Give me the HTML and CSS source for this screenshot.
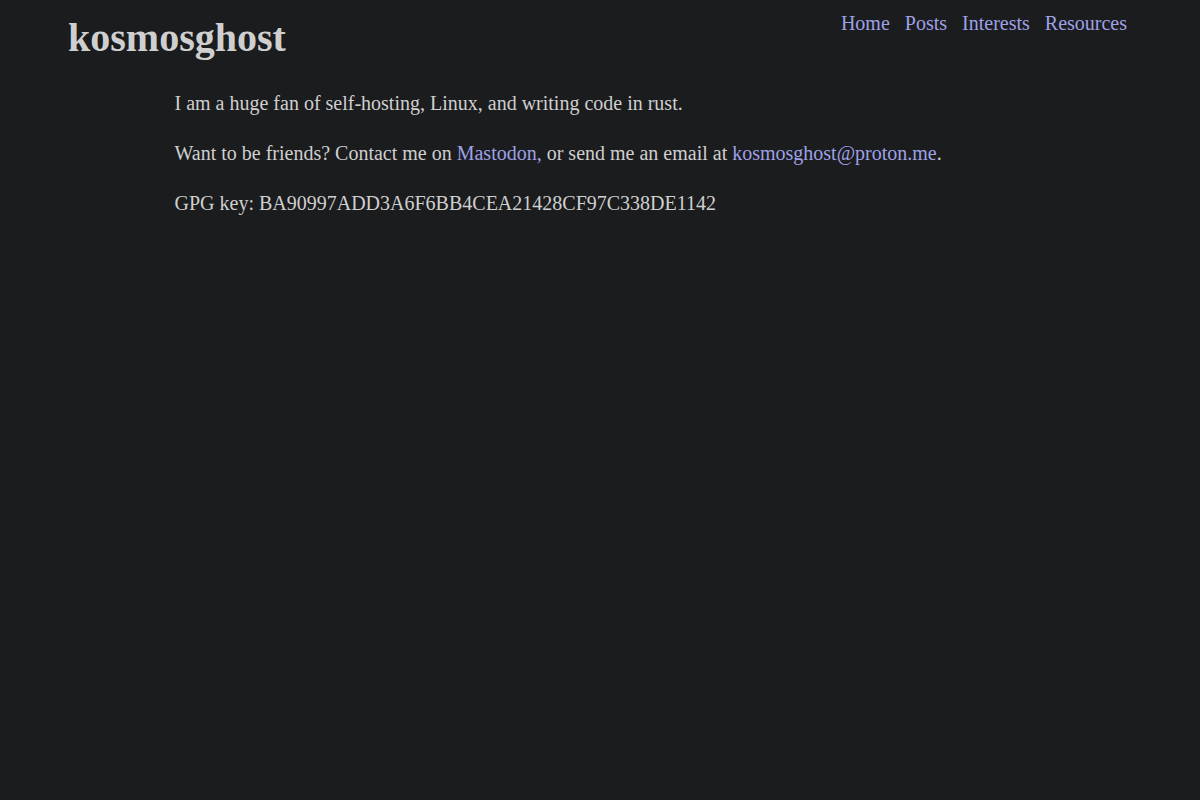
FILE: index.html
```html
<!DOCTYPE html>
<html lang="en">
<head>
    <meta charset="UTF-8">
    <meta name="viewport" content="width=device-width, initial-scale=1.0">
    <title>kosmosghost</title>
    <link rel="stylesheet" href="styles.css">
</head>
<body>
    <header class="site-header">
        <a class="site-title" href="#">kosmosghost</a>
        <nav class="site-nav">
            <a href="#">Home</a>
            <a href="#">Posts</a>
            <a href="#">Interests</a>
            <a href="#">Resources</a>
        </nav>
    </header>

    <main class="content">
        <p>I am a huge fan of self-hosting, Linux, and writing code in rust.</p>
        <p>Want to be friends? Contact me on <a href="#">Mastodon,</a> or send me an email at <a href="#">kosmosghost@proton.me</a>.</p>
        <p>GPG key: BA90997ADD3A6F6BB4CEA21428CF97C338DE1142</p>
    </main>
</body>
</html>
```

FILE: styles.css
```css
body {
    margin: 0;
    background: #1b1c1e;
    color: #cfcfcf;
    font-family: "Liberation Serif", "Times New Roman", serif;
    font-size: 20px;
    line-height: 1.5;
}
a {
    color: #9fa1e6;
    text-decoration: none;
}
.site-header {
    display: flex;
    justify-content: space-between;
    align-items: flex-start;
    padding: 0 73px 0 68px;
}
.site-title {
    color: #cfcfcf;
    font-size: 40px;
    font-weight: bold;
    line-height: 1;
    margin-top: 18px;
}
.site-nav {
    display: flex;
    gap: 15px;
    margin-top: 8px;
}
.content {
    padding: 0 174.5px;
    margin-top: 30px;
}
.content p {
    margin: 0 0 20px;
}
```
